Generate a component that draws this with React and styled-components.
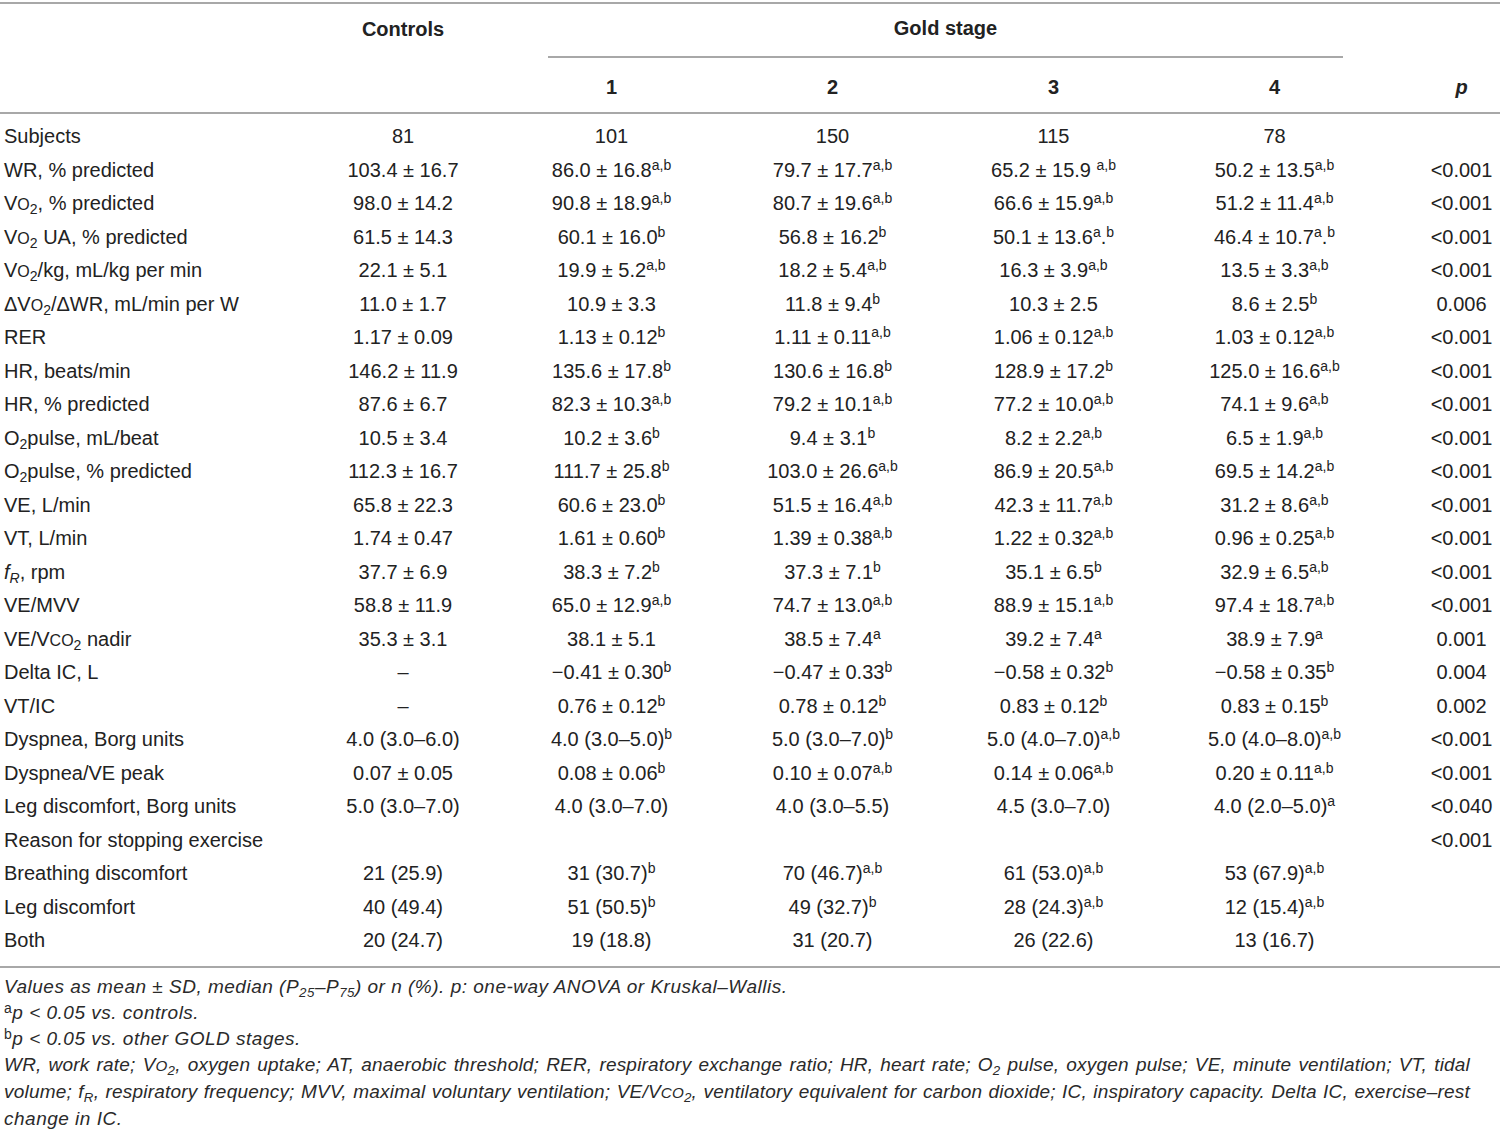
import React from "react";
import styled, { createGlobalStyle } from "styled-components";

const Global = createGlobalStyle`
  body {
    margin: 0;
    background: #fff;
    font-family: "Liberation Sans", Arial, Helvetica, sans-serif;
    color: #222;
  }
`;

const Page = styled.div`
  width: 1500px;
  padding-top: 2px;
`;

const Table = styled.div`
  border-top: 2px solid #a8a8a8;
  border-bottom: 2px solid #a8a8a8;
`;

const cols = "305px 196px 221px 221px 221px 221px 1fr";

const HeadTop = styled.div`
  display: grid;
  grid-template-columns: ${cols};
  height: 54px;
  font-weight: 700;
  font-size: 20px;
`;

const HeadBottom = styled(HeadTop)`
  height: 54px;
  border-bottom: 2px solid #a8a8a8;
`;

const HeadCell = styled.div`
  display: flex;
  align-items: center;
  justify-content: center;
  padding: ${(p) => (p.$low ? "5px 0 0" : "0 0 4px")};
  grid-column: ${(p) => p.$span || "auto"};
  font-style: ${(p) => (p.$italic ? "italic" : "normal")};
  padding-left: ${(p) => (p.$pcol ? "38px" : "0")};
`;

const GoldCell = styled(HeadCell)`
  margin: 0 42px 0 47px;
  border-bottom: 2px solid #a8a8a8;
`;

const Body = styled.div`
  padding: 6px 0 8px;
`;

const Row = styled.div`
  display: grid;
  grid-template-columns: ${cols};
  height: 33.5px;
  align-items: center;
  font-size: 20px;
  white-space: nowrap;
`;

const Label = styled.div`
  padding-left: 4px;
`;

const Value = styled.div`
  text-align: center;
  padding-left: ${(p) => (p.$pcol ? "38px" : "0")};
`;

const Sup = styled.sup`
  font-size: 14px;
  vertical-align: 7px;
  line-height: 0;
`;

const Sub = styled.sub`
  font-size: 0.7em;
  vertical-align: -0.3em;
  line-height: 0;
`;

const Sc = styled.span`
  font-size: 0.8em;
`;

const Footer = styled.div`
  padding: 6px 30px 0 4px;
  font-style: italic;
  font-size: 19px;
  letter-spacing: 0.5px;
  line-height: 26px;
  color: #2a2a2a;
`;

const Note = styled.div`
  white-space: nowrap;
`;

const Spread = styled.div`
  text-align: justify;
  text-align-last: justify;
  white-space: nowrap;
  letter-spacing: 0.2px;
`;

const FootSup = styled.sup`
  font-size: 14px;
  vertical-align: 6px;
  line-height: 0;
  font-style: normal;
`;

const Vo2 = () => (
  <>
    V<Sc>O</Sc>
    <Sub>2</Sub>
  </>
);

const Vco2 = () => (
  <>
    V<Sc>CO</Sc>
    <Sub>2</Sub>
  </>
);

const Cell = ({ text, pcol }) => {
  const parts = text.split(/\{([^}]*)\}/);
  return (
    <Value $pcol={pcol}>
      {parts.map((p, i) => (i % 2 ? <Sup key={i}>{p}</Sup> : <React.Fragment key={i}>{p}</React.Fragment>))}
    </Value>
  );
};

const rows = [
  ["Subjects", "81", "101", "150", "115", "78", ""],
  ["WR, % predicted", "103.4 ± 16.7", "86.0 ± 16.8{a,b}", "79.7 ± 17.7{a,b}", "65.2 ± 15.9 {a,b}", "50.2 ± 13.5{a,b}", "<0.001"],
  [<><Vo2 />, % predicted</>, "98.0 ± 14.2", "90.8 ± 18.9{a,b}", "80.7 ± 19.6{a,b}", "66.6 ± 15.9{a,b}", "51.2 ± 11.4{a,b}", "<0.001"],
  [<><Vo2 /> UA, % predicted</>, "61.5 ± 14.3", "60.1 ± 16.0{b}", "56.8 ± 16.2{b}", "50.1 ± 13.6{a}.{b}", "46.4 ± 10.7{a}.{b}", "<0.001"],
  [<><Vo2 />/kg, mL/kg per min</>, "22.1 ± 5.1", "19.9 ± 5.2{a,b}", "18.2 ± 5.4{a,b}", "16.3 ± 3.9{a,b}", "13.5 ± 3.3{a,b}", "<0.001"],
  [<>Δ<Vo2 />/ΔWR, mL/min per W</>, "11.0 ± 1.7", "10.9 ± 3.3", "11.8 ± 9.4{b}", "10.3 ± 2.5", "8.6 ± 2.5{b}", "0.006"],
  ["RER", "1.17 ± 0.09", "1.13 ± 0.12{b}", "1.11 ± 0.11{a,b}", "1.06 ± 0.12{a,b}", "1.03 ± 0.12{a,b}", "<0.001"],
  ["HR, beats/min", "146.2 ± 11.9", "135.6 ± 17.8{b}", "130.6 ± 16.8{b}", "128.9 ± 17.2{b}", "125.0 ± 16.6{a,b}", "<0.001"],
  ["HR, % predicted", "87.6 ± 6.7", "82.3 ± 10.3{a,b}", "79.2 ± 10.1{a,b}", "77.2 ± 10.0{a,b}", "74.1 ± 9.6{a,b}", "<0.001"],
  [<>O<Sub>2</Sub>pulse, mL/beat</>, "10.5 ± 3.4", "10.2 ± 3.6{b}", "9.4 ± 3.1{b}", "8.2 ± 2.2{a,b}", "6.5 ± 1.9{a,b}", "<0.001"],
  [<>O<Sub>2</Sub>pulse, % predicted</>, "112.3 ± 16.7", "111.7 ± 25.8{b}", "103.0 ± 26.6{a,b}", "86.9 ± 20.5{a,b}", "69.5 ± 14.2{a,b}", "<0.001"],
  ["VE, L/min", "65.8 ± 22.3", "60.6 ± 23.0{b}", "51.5 ± 16.4{a,b}", "42.3 ± 11.7{a,b}", "31.2 ± 8.6{a,b}", "<0.001"],
  ["VT, L/min", "1.74 ± 0.47", "1.61 ± 0.60{b}", "1.39 ± 0.38{a,b}", "1.22 ± 0.32{a,b}", "0.96 ± 0.25{a,b}", "<0.001"],
  [<><i>f</i><Sub><i>R</i></Sub>, rpm</>, "37.7 ± 6.9", "38.3 ± 7.2{b}", "37.3 ± 7.1{b}", "35.1 ± 6.5{b}", "32.9 ± 6.5{a,b}", "<0.001"],
  ["VE/MVV", "58.8 ± 11.9", "65.0 ± 12.9{a,b}", "74.7 ± 13.0{a,b}", "88.9 ± 15.1{a,b}", "97.4 ± 18.7{a,b}", "<0.001"],
  [<>VE/<Vco2 /> nadir</>, "35.3 ± 3.1", "38.1 ± 5.1", "38.5 ± 7.4{a}", "39.2 ± 7.4{a}", "38.9 ± 7.9{a}", "0.001"],
  ["Delta IC, L", "–", "−0.41 ± 0.30{b}", "−0.47 ± 0.33{b}", "−0.58 ± 0.32{b}", "−0.58 ± 0.35{b}", "0.004"],
  ["VT/IC", "–", "0.76 ± 0.12{b}", "0.78 ± 0.12{b}", "0.83 ± 0.12{b}", "0.83 ± 0.15{b}", "0.002"],
  ["Dyspnea, Borg units", "4.0 (3.0–6.0)", "4.0 (3.0–5.0){b}", "5.0 (3.0–7.0){b}", "5.0 (4.0–7.0){a,b}", "5.0 (4.0–8.0){a,b}", "<0.001"],
  ["Dyspnea/VE peak", "0.07 ± 0.05", "0.08 ± 0.06{b}", "0.10 ± 0.07{a,b}", "0.14 ± 0.06{a,b}", "0.20 ± 0.11{a,b}", "<0.001"],
  ["Leg discomfort, Borg units", "5.0 (3.0–7.0)", "4.0 (3.0–7.0)", "4.0 (3.0–5.5)", "4.5 (3.0–7.0)", "4.0 (2.0–5.0){a}", "<0.040"],
  ["Reason for stopping exercise", "", "", "", "", "", "<0.001"],
  ["Breathing discomfort", "21 (25.9)", "31 (30.7){b}", "70 (46.7){a,b}", "61 (53.0){a,b}", "53 (67.9){a,b}", ""],
  ["Leg discomfort", "40 (49.4)", "51 (50.5){b}", "49 (32.7){b}", "28 (24.3){a,b}", "12 (15.4){a,b}", ""],
  ["Both", "20 (24.7)", "19 (18.8)", "31 (20.7)", "26 (22.6)", "13 (16.7)", ""],
];

export default function App() {
  return (
    <Page>
      <Global />
      <Table>
        <HeadTop>
          <div />
          <HeadCell>Controls</HeadCell>
          <GoldCell $span="3 / 7">Gold stage</GoldCell>
          <div />
        </HeadTop>
        <HeadBottom>
          <div />
          <div />
          <HeadCell $low>1</HeadCell>
          <HeadCell $low>2</HeadCell>
          <HeadCell $low>3</HeadCell>
          <HeadCell $low>4</HeadCell>
          <HeadCell $low $italic $pcol>p</HeadCell>
        </HeadBottom>
        <Body>
          {rows.map((r, i) => (
            <Row key={i}>
              <Label>{r[0]}</Label>
              {r.slice(1).map((v, j) => (
                <Cell key={j} text={v} pcol={j === 5} />
              ))}
            </Row>
          ))}
        </Body>
      </Table>
      <Footer>
        <Note>
          Values as mean ± SD, median (P<Sub>25</Sub>–P<Sub>75</Sub>) or n (%). p: one-way ANOVA or Kruskal–Wallis.
        </Note>
        <Note>
          <FootSup>a</FootSup>p &lt; 0.05 vs. controls.
        </Note>
        <Note>
          <FootSup>b</FootSup>p &lt; 0.05 vs. other GOLD stages.
        </Note>
        <Spread>
          WR, work rate; V<Sc>O</Sc><Sub>2</Sub>, oxygen uptake; AT, anaerobic threshold; RER, respiratory exchange ratio; HR, heart rate; O<Sub>2</Sub> pulse, oxygen pulse; VE, minute ventilation; VT, tidal
        </Spread>
        <Spread>
          volume; f<Sub>R</Sub>, respiratory frequency; MVV, maximal voluntary ventilation; VE/V<Sc>CO</Sc><Sub>2</Sub>, ventilatory equivalent for carbon dioxide; IC, inspiratory capacity. Delta IC, exercise–rest
        </Spread>
        <Note>change in IC.</Note>
      </Footer>
    </Page>
  );
}
